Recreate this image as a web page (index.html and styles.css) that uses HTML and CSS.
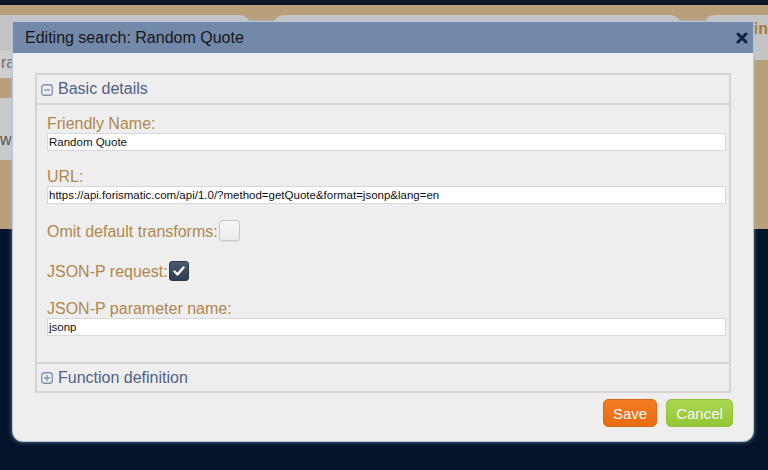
FILE: index.html
```html
<!DOCTYPE html>
<html>
<head>
<meta charset="utf-8">
<title>Editing search</title>
<link rel="stylesheet" href="styles.css">
</head>
<body>
<div class="page">
  <div class="topbar"></div>
  <div class="tan">
    <div class="cards-row">
      <div class="card c1"><div class="c1-top"></div><div class="c1-bottom">ra</div></div>
      <div class="card c2"></div>
      <div class="card c3">in</div>
    </div>
    <div class="card c4">wh</div>
  </div>
  <div class="navy"></div>
</div>

<div class="modal">
  <div class="modal-title">
    <span>Editing search: Random Quote</span>
    <svg class="close" width="12" height="12" viewBox="0 0 12 12"><path d="M2 2L10 10M10 2L2 10" stroke="#0f2346" stroke-width="3" stroke-linecap="round"/></svg>
  </div>
  <div class="modal-body">
    <div class="panel">
      <div class="panel-head">
        <svg width="12" height="12" viewBox="0 0 12 12"><rect x="0.75" y="0.75" width="10.5" height="10.5" rx="2.5" fill="none" stroke="#7f91b3" stroke-width="1.3"/><path d="M3 6H9" stroke="#7f91b3" stroke-width="1.3"/></svg>
        <span>Basic details</span>
      </div>
      <div class="panel-content">
        <div class="label">Friendly Name:</div>
        <div class="input">Random Quote</div>
        <div class="label gap">URL:</div>
        <div class="input">https://api.forismatic.com/api/1.0/?method=getQuote&amp;format=jsonp&amp;lang=en</div>
        <div class="check-row r1">
          <span class="label">Omit default transforms:</span>
          <span class="cb off"></span>
        </div>
        <div class="check-row r2">
          <span class="label">JSON-P request:</span>
          <span class="cb on"><svg width="14" height="12" viewBox="0 0 14 12"><path d="M2.5 6.5L5.5 9.5L11.5 2.5" fill="none" stroke="#fff" stroke-width="2.4" stroke-linecap="round" stroke-linejoin="round"/></svg></span>
        </div>
        <div class="label gap3">JSON-P parameter name:</div>
        <div class="input">jsonp</div>
      </div>
      <div class="panel-head sep">
        <svg width="12" height="12" viewBox="0 0 12 12"><rect x="0.75" y="0.75" width="10.5" height="10.5" rx="2.5" fill="none" stroke="#7f91b3" stroke-width="1.3"/><path d="M3 6H9M6 3V9" stroke="#7f91b3" stroke-width="1.3"/></svg>
        <span>Function definition</span>
      </div>
    </div>
    <div class="buttons">
      <button class="btn save">Save</button>
      <button class="btn cancel">Cancel</button>
    </div>
  </div>
</div>
</body>
</html>
```

FILE: styles.css
```css
* { box-sizing: border-box; }
html, body { margin: 0; padding: 0; }
body {
  width: 768px;
  height: 470px;
  overflow: hidden;
  font-family: "Liberation Sans", Arial, sans-serif;
  background: #03132a;
  position: relative;
}
.page { display: flex; flex-direction: column; height: 470px; }
.topbar { height: 5px; background: #0b1628; }
.tan { height: 224px; background: #b8a07b; padding-top: 10px; }
.navy { flex: 1; background: #03132a; }
.cards-row { display: flex; gap: 23px; align-items: flex-start; }
.card { background: #c5c5c5; }
.c1 { width: 250px; height: 63px; border-radius: 0 11px 0 0; display: flex; flex-direction: column; overflow: hidden; }
.c1-top { height: 35px; background: #c3c3c3; }
.c1-bottom { flex: 1; background: #cecece; color: #707070; font-size: 16px; line-height: 26px; padding-left: 1px; }
.c2 { width: 409px; height: 45px; border-radius: 11px 11px 0 0; }
.c3 { flex: 1; height: 45px; border-radius: 11px 0 0 0; color: #a27a3e; font-weight: bold; font-size: 16px; line-height: 22px; padding: 3px 0 0 50px; }
.c4 { width: 220px; height: 62px; margin-top: 20px; background: #cacaca; color: #555; font-size: 16px; padding: 33px 0 0 0; }

.modal {
  position: absolute;
  left: 13px;
  top: 22px;
  width: 740px;
  height: 419px;
  background: #eeeeee;
  border-radius: 0 0 10px 10px;
  box-shadow: 0 0 0 1px #b9c6d8, 0 0 5px 1px rgba(175, 195, 225, 0.55);
  display: flex;
  flex-direction: column;
}
.modal-title {
  height: 31px;
  background: #7389aa;
  display: flex;
  align-items: center;
  justify-content: space-between;
  padding: 0 5px 0 12px;
  font-size: 16px;
  color: #161616;
}
.close { display: block; margin-top: 1px; }
.modal-body { padding: 20px 22px 0 22px; }
.panel { border: 2px solid #d4d4d4; }
.panel-head {
  height: 28px;
  display: flex;
  align-items: center;
  gap: 5px;
  padding-left: 4px;
  color: #4f6189;
  font-size: 16px;
}
.panel-head svg { display: block; margin-top: 1px; }
.panel-head.sep { border-top: 2px solid #d4d4d4; height: 29px; }
.panel-content {
  border-top: 2px solid #d4d4d4;
  height: 259px;
  padding: 10px 3px 0 10px;
}
.label { font-size: 16px; line-height: 18px; color: #b0874f; }
.label.gap { margin-top: 17px; }
.label.gap3 { margin-top: 19px; }
.input {
  height: 18px;
  background: #fff;
  border: 1px solid #d8d8d8;
  font-size: 11.5px;
  line-height: 16px;
  padding-left: 1px;
  color: #111;
  white-space: nowrap;
  overflow: hidden;
}
.check-row { display: flex; align-items: flex-end; gap: 1px; }
.check-row.r1 { margin-top: 16px; }
.check-row.r2 { margin-top: 20px; }
.cb { display: block; border-radius: 3px; }
.cb.off {
  width: 21px; height: 21px;
  background: linear-gradient(#f7f7f7, #ececec);
  border: 1px solid #c6c6c6;
  box-shadow: 0 1px 1px rgba(0,0,0,0.05);
}
.cb.on {
  width: 20px; height: 20px;
  background: linear-gradient(#4b5b70, #2f3d4f);
  border: 1px solid #2b3849;
  display: flex; align-items: center; justify-content: center;
}
.cb.on svg { display: block; }
.buttons {
  display: flex;
  justify-content: flex-end;
  gap: 9px;
  margin-top: 6px;
  margin-right: -2px;
}
.btn {
  height: 28px;
  border-radius: 5px;
  font-family: "Liberation Sans", Arial, sans-serif;
  font-size: 15px;
  color: #fff;
  padding: 0;
  text-shadow: 0 0 1px rgba(0,0,0,0.15);
}
.save {
  width: 54px;
  background: linear-gradient(#f37c22, #ea6b12);
  border: 1px solid #e3690f;
}
.cancel {
  width: 67px;
  background: linear-gradient(#abd653, #93c634);
  border: 1px solid #92c33a;
}
```
